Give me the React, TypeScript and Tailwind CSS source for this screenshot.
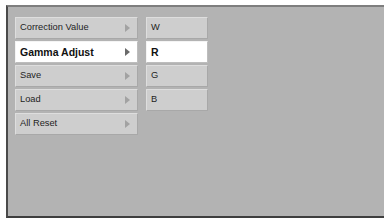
import React from "react";

const left = [
  { label: "Correction Value", sel: false },
  { label: "Gamma Adjust", sel: true },
  { label: "Save", sel: false },
  { label: "Load", sel: false },
  { label: "All Reset", sel: false },
];
const right = [
  { label: "W", sel: false },
  { label: "R", sel: true },
  { label: "G", sel: false },
  { label: "B", sel: false },
];

function Arrow({ sel }: { sel: boolean }) {
  return (
    <svg width="5" height="8" viewBox="0 0 5 8" className="shrink-0">
      <path d="M0 0 L5 4 L0 8 Z" fill={sel ? "#6a6a6a" : "#a2a2a2"} />
    </svg>
  );
}

function Item({ label, sel, arrow }: { label: string; sel: boolean; arrow: boolean }) {
  return (
    <div
      className={
        sel
          ? "h-[22px] flex items-center justify-between pl-[4px] pr-[7px] bg-white border-t border-l border-[#f4f4f4] border-b border-r border-b-[#bdbdbd] border-r-[#bdbdbd]"
          : "h-[22px] flex items-center justify-between pl-[4px] pr-[7px] bg-[#cecece] border-t border-l border-[#dedede] border-b border-r border-b-[#a8a8a8] border-r-[#a8a8a8]"
      }
    >
      <span
        className={
          sel
            ? "text-[10.5px] font-bold text-[#111] leading-none"
            : "text-[9.3px] text-[#1e1e1e] leading-none"
        }
      >
        {label}
      </span>
      {arrow && <Arrow sel={sel} />}
    </div>
  );
}

export default function App() {
  return (
    <div
      className="w-[384px] h-[220px] bg-white pl-[6px] pt-[5px] pb-[2px] flex"
      style={{ fontFamily: '"Liberation Sans", Arial, sans-serif' }}
    >
      <div className="flex-1 bg-[#b3b3b3] border-t-2 border-t-[#7e7e7e] border-l-2 border-l-[#4a4a4a] border-b-2 border-b-[#3e3e3e] pl-[7px] pt-[10px] flex gap-[8px] items-start">
        <div className="w-[123px] flex flex-col gap-[2px]">
          {left.map((it) => (
            <Item key={it.label} label={it.label} sel={it.sel} arrow />
          ))}
        </div>
        <div className="w-[62px] flex flex-col gap-[2px]">
          {right.map((it) => (
            <Item key={it.label} label={it.label} sel={it.sel} arrow={false} />
          ))}
        </div>
      </div>
    </div>
  );
}
